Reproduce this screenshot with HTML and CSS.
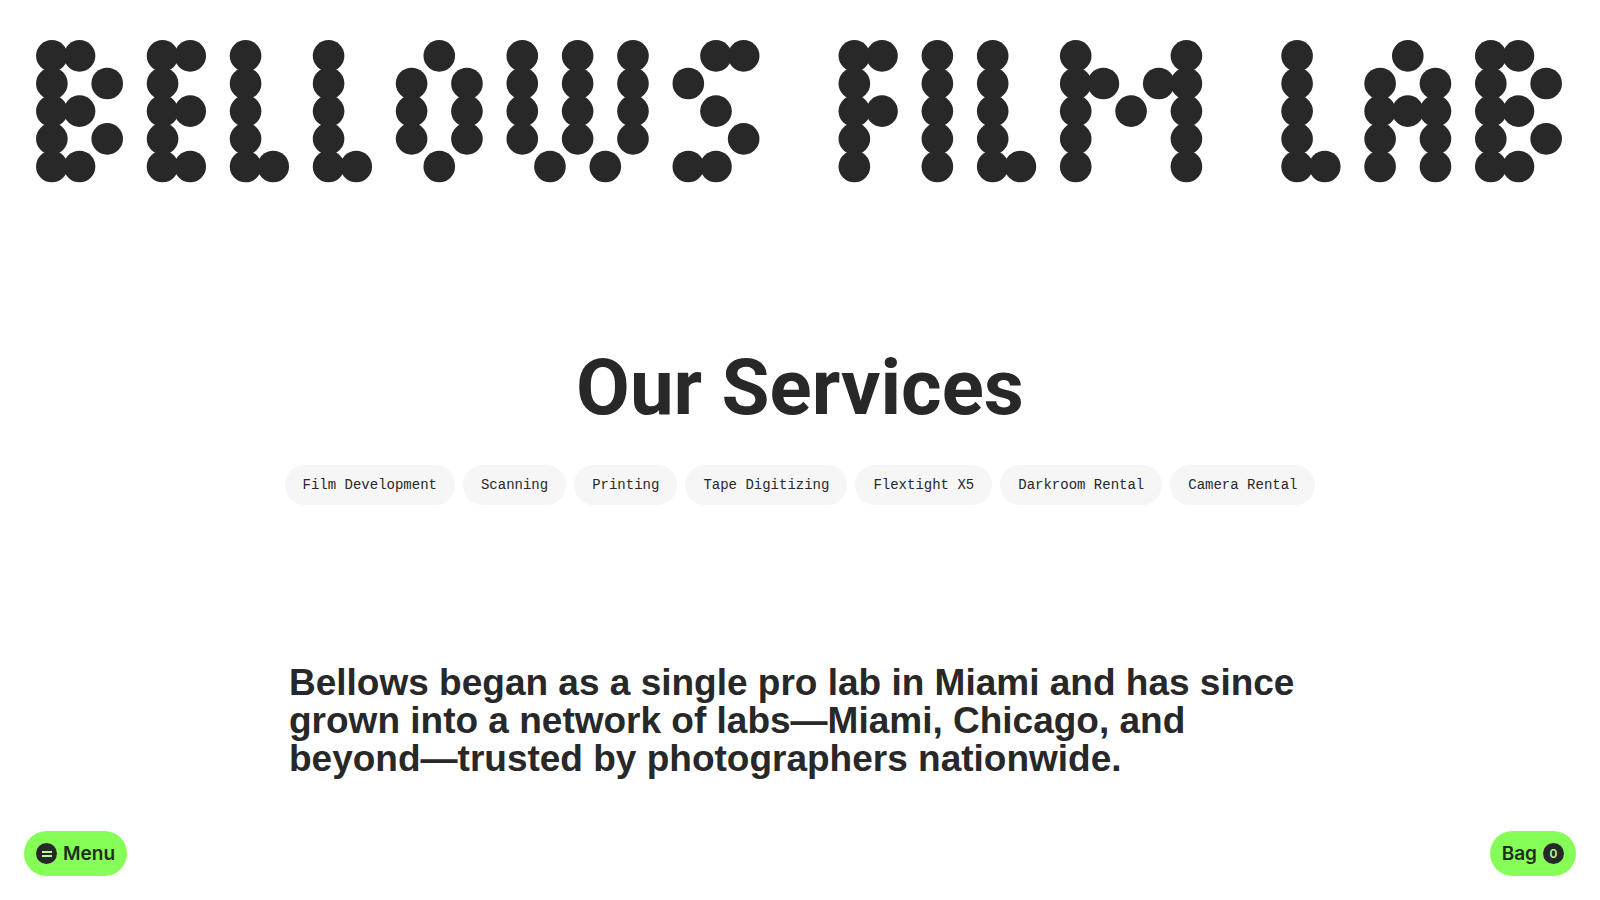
FILE: index.html
```html
<!DOCTYPE html>
<html lang="en">
<head>
    <meta charset="UTF-8">
    <meta name="viewport" content="width=device-width, initial-scale=1.0">
    <title>Bellows Film Lab - Our Services</title>
    <link rel="stylesheet" href="styles.css">
</head>
<body>

    <!-- Logo -->
    <header class="site-header">
        <a href="#" class="logo-link" aria-label="Bellows Film Lab">
            <svg id="logo" class="logo" viewBox="0 0 1544 144" aria-hidden="true"></svg>
        </a>
    </header>

    <!-- Services -->
    <main>
        <section class="services">
            <h1>Our Services</h1>
            <nav class="pills">
                <a href="#">Film Development</a>
                <a href="#">Scanning</a>
                <a href="#">Printing</a>
                <a href="#">Tape Digitizing</a>
                <a href="#">Flextight X5</a>
                <a href="#">Darkroom Rental</a>
                <a href="#">Camera Rental</a>
            </nav>
        </section>

        <p class="intro">Bellows began as a single pro lab in Miami and has since grown into a network of labs—Miami, Chicago, and beyond—trusted by photographers nationwide.</p>
    </main>

    <!-- Floating buttons -->
    <button type="button" class="float-btn menu-btn">
        <svg class="menu-icon" viewBox="0 0 21 21" aria-hidden="true">
            <circle cx="10.5" cy="10.5" r="10.5" fill="#282828"/>
            <path d="M6 9h10M6 13h10" stroke="#b4ff98" stroke-width="2"/>
        </svg>
        Menu
    </button>
    <button type="button" class="float-btn bag-btn">
        Bag
        <span class="bag-count">0</span>
    </button>

    <script>
        // Each letter is five rows of dots
        const letters = {
            B: ["XX.", "X.X", "XX.", "X.X", "XX."],
            E: ["XX", "X.", "XX", "X.", "XX"],
            L: ["X.", "X.", "X.", "X.", "XX"],
            O: [".X.", "X.X", "X.X", "X.X", ".X."],
            W: ["X.X.X", "X.X.X", "X.X.X", "X.X.X", ".X.X."],
            S: [".XX", "X..", ".X.", "..X", "XX."],
            F: ["XX", "X.", "XX", "X.", "X."],
            I: ["X", "X", "X", "X", "X"],
            M: ["X...X", "XX.XX", "X.X.X", "X...X", "X...X"],
            A: [".X.", "X.X", "XXX", "X.X", "X.X"]
        };

        const logo = document.getElementById("logo");
        let column = 0;

        for (const char of "BELLOWS FILM LAB") {
            if (char === " ") {
                column += 2;
                continue;
            }
            letters[char].forEach((row, y) => {
                [...row].forEach((cell, x) => {
                    if (cell !== "X") return;
                    const dot = document.createElementNS("http://www.w3.org/2000/svg", "circle");
                    dot.setAttribute("cx", 16 + (column + x) * 28);
                    dot.setAttribute("cy", 16 + y * 28);
                    dot.setAttribute("r", 16);
                    logo.appendChild(dot);
                });
            });
            column += letters[char][0].length + 1;
        }
    </script>

</body>
</html>
```

FILE: styles.css
```css
* { box-sizing: border-box; }
body { margin: 0; background: #fff; color: #282828; font-family: Roboto, "Liberation Sans", sans-serif; }
a { color: inherit; text-decoration: none; }
main { padding-bottom: 96px; }

/* Logo */
.site-header { padding: 40px 38px 0 36px; }
.logo-link { display: block; }
.logo { display: block; width: 100%; overflow: visible; fill: #282828; }

/* Services */
.services { display: flex; flex-direction: column; align-items: center; gap: 38px; padding: 167px 24px 0; }
h1 { margin: 0; font-size: 78px; line-height: 78px; font-weight: 700; }
.pills { display: flex; flex-wrap: wrap; justify-content: center; gap: 8px; }
.pills a { padding: 0 18px; border-radius: 20px; background: #f6f6f6; font-family: "Liberation Mono", monospace; font-size: 14px; line-height: 40px; }

/* Intro */
.intro { max-width: 1022px; margin: 159px auto 0; font-family: "Liberation Sans", sans-serif; font-size: 37px; line-height: 38px; font-weight: 700; }

/* Floating buttons */
.float-btn { position: fixed; bottom: 24px; display: flex; align-items: center; gap: 6px; height: 45px; padding: 0 12px; border: none; border-radius: 23px; background: #85ff57; color: #1f2e1a; font-family: Inter, sans-serif; font-size: 19px; font-weight: 600; cursor: pointer; }
.menu-btn { left: 24px; }
.bag-btn { right: 24px; }
.menu-icon { width: 21px; height: 21px; }
.bag-count { width: 21px; height: 21px; border-radius: 50%; background: #282828; color: #b4ff98; font-size: 12px; line-height: 21px; text-align: center; }
```
